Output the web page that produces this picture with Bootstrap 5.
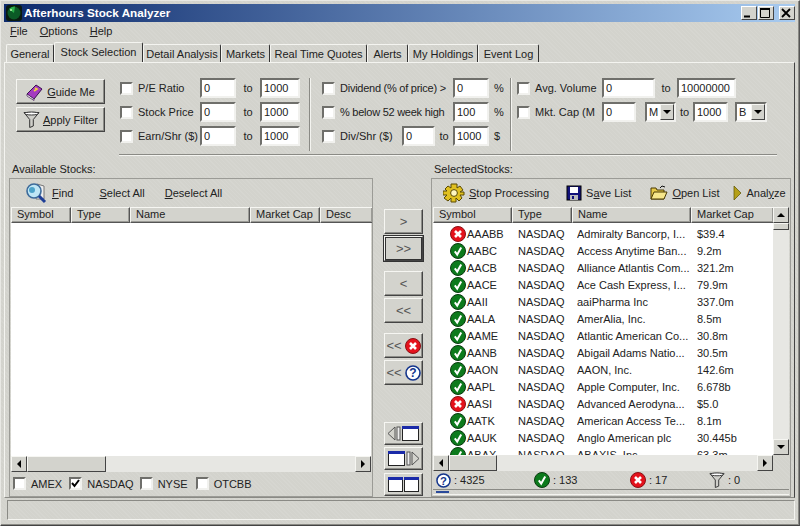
<!DOCTYPE html>
<html lang="en">
<head>
<meta charset="utf-8">
<title>Afterhours Stock Analyzer</title>
<link rel="stylesheet" href="https://cdn.jsdelivr.net/npm/bootstrap@5.3.0/dist/css/bootstrap.min.css">
<style>
html,body{margin:0;width:800px;height:526px;overflow:hidden;background:#d3d3cd}
body{font:11px/14px "Liberation Sans",Arial,sans-serif;color:#222}
.appwin{width:800px;height:526px;padding:3px 4px 5px 3px;background:#d3d3cd;border:1px solid #e8e8e4;border-right-color:#555;border-bottom-color:#444;box-shadow:inset -1px -1px 0 #8a8a85;
 background-image:repeating-linear-gradient(45deg,rgba(255,255,255,.07) 0 1px,transparent 1px 3px)}
.capbar{height:18px;flex:none;background:linear-gradient(90deg,#0c2a6c,#a8cbf0);color:#fff;font-weight:700;font-size:11.7px;padding-left:2px}
.capbar svg{margin-right:2px}
.capbtn{width:16px;height:14px;background:#d3d3cd;border:1px solid;border-color:#fff #444 #444 #fff;margin-right:1px;color:#000;display:flex;align-items:center;justify-content:center}
.menubar{height:20px;flex:none;padding:2px 6px 0;gap:12px;color:#222}
.menubar u,.wbtn u,.tooltxt u{text-underline-offset:1px}
.tabline{height:20px;flex:none;padding-left:2px;border:0;align-items:flex-end}
.tabitem{height:18px;padding:2px 0 0;text-align:center;flex:none;background:transparent;border:1px solid;border-color:#f4f4f0 #333 transparent #f4f4f0;border-bottom:0;border-radius:2px 2px 0 0;color:#222;white-space:nowrap}
.tabitem.sel{height:20px;position:relative;z-index:1;background:#d3d3cd}
.tb48{width:48px}.tb89{width:89px}.tb78{width:78px}.tb49{width:49px}.tb97{width:97px}.tb41{width:41px}.tb70{width:70px}.tb61{width:61px}
.panel{height:436px;flex:none;border:1px solid;border-color:#f4f4f0 #444 #8a8a85 #f4f4f0;padding:15px 4px 0 4px}
.filters{height:76px;flex:none;gap:0}
.wbtn{border:1px solid;border-color:#f6f6f2 #444 #444 #f6f6f2;box-shadow:inset -1px -1px 0 #8d8d88;background:#d3d3cd;border-radius:0;padding:0;color:#222;font:inherit;display:flex;align-items:center;justify-content:center;gap:3px}
.wbtn:hover{background:#d3d3cd;color:#222}
.guide{width:89px;height:25px}
.btnstack{width:111px;padding:1px 0 0 7px;gap:3px}
.fgroup{gap:4px;height:73px}
.g1{width:189px}
.g2{width:191px;margin-left:8px;padding-left:3px}
.g3{margin-left:5px}
.frow{height:20px;display:flex;align-items:center}
.wfield{height:20px;border:2px solid;border-color:#6f6f6b #f1f1ee #f1f1ee #6f6f6b;background:#fff;padding:0 0 0 2px;border-radius:0;font:inherit;color:#222;min-height:0;box-shadow:none;flex:none}
.wfield:focus{box-shadow:none;border-color:#6f6f6b #f1f1ee #f1f1ee #6f6f6b}
.wcheck{width:13px;height:13px;margin:0;border:2px solid;border-color:#6f6f6b #f1f1ee #f1f1ee #6f6f6b;border-radius:0!important;background:#fff;flex:none;float:none}
.wcheck:checked{background-color:#fff;border-color:#6f6f6b #f1f1ee #f1f1ee #6f6f6b;background-image:url("data:image/svg+xml,%3csvg xmlns='http://www.w3.org/2000/svg' viewBox='0 0 9 9'%3e%3cpath d='M1 4l2.5 3L8 1' fill='none' stroke='%23000' stroke-width='2'/%3e%3c/svg%3e");background-size:9px}
.wcheck:focus{box-shadow:none}
.lab{margin-left:5px;white-space:nowrap;flex:none}
.l62{width:62px}.l113{width:113px;letter-spacing:-.25px}.l67{width:67px}
.i33{width:33px}.i34{width:34px}.i35{width:35px}.i36{width:36px}.i40{width:40px}.i53{width:53px}.i59{width:59px}
.t24{width:24px}.t18{width:18px}.t22{width:22px}.t17{width:17px}
.unit{margin-left:5px}
.vsep{width:2px;height:73px;background:#8a8a85;border-right:1px solid #f4f4f0;flex:none}
.tolab{text-align:center;flex:none}
.wsel{display:flex;border:2px solid;border-color:#6f6f6b #f1f1ee #f1f1ee #6f6f6b;height:20px;background:#fff;padding-left:2px;align-items:center;justify-content:space-between;width:32px;flex:none}
.sel1{margin-left:9px;width:31px}.sel2{margin-left:7px}
.wsel b{width:14px;height:16px;background:#d3d3cd;border:1px solid;border-color:#f6f6f2 #444 #444 #f6f6f2;display:flex;align-items:center;justify-content:center}
.tri{width:0;height:0;border-left:4px solid transparent;border-right:4px solid transparent;border-top:4px solid #000}
.hrule{height:2px;flex:none;background:#8a8a85;border-bottom:1px solid #f4f4f0;margin:0 13px 0 110px}
.caplab{height:16px;flex:none;margin-top:6px;padding-left:3px;line-height:14px;white-space:nowrap}
.capr{width:356px;margin-left:auto}
.lowmain{height:319px;flex:none}
.wbox{border:1px solid;border-color:#f4f4f0 #8a8a85 #f4f4f0 #f4f4f0;outline:1px solid #9b9b96;outline-offset:-1px;padding:1px;display:flex;flex-direction:column;height:319px}
.leftcol{width:364px;flex:none}
.rightcol{width:360px;flex:none}
.midcol{width:39px;margin:0 8px 0 11px;flex:none}
.toolrow{height:27px;flex:none;align-items:center;white-space:nowrap;padding-bottom:2px}
.tooltxt{display:flex;align-items:center;gap:4px}
.tfind{margin-left:13px}.tsel{margin-left:26px}.tdes{margin-left:20px}
.tstop{margin-left:10px}.tsave{margin-left:17px}.topen{margin-left:19px}.tana{margin-left:14px}
.gridhead{height:16px;flex:none;display:flex}
.colh{height:16px;border:1px solid;border-color:#f6f6f2 #555 #555 #f6f6f2;box-shadow:inset -1px -1px 0 #9b9b96;padding:0 0 0 5px;line-height:13px;background:#d3d3cd;white-space:nowrap;overflow:hidden;flex:none}
.h60{width:60px}.h59{width:59px}.h120{width:120px}.h70{width:70px}.h53{width:53px}.h79{width:79px}.h119{width:119px}.h83{width:83px}
.whitearea{background:#fff;flex:1;min-height:0;overflow:hidden}
.rowsbox{padding-top:2px}
.hbar{height:16px;flex:none;display:flex;background:#e7e7e3}
.hbar2{margin-right:16px}
.vbar{width:16px;background:#e7e7e3;flex:none}
.sbtn{width:16px;height:16px;background:#d3d3cd;border:1px solid;border-color:#f6f6f2 #444 #444 #f6f6f2;display:flex;align-items:center;justify-content:center;flex:none}
.tl{width:0;height:0;border-top:4px solid transparent;border-bottom:4px solid transparent;border-right:4px solid #000}
.tr{width:0;height:0;border-top:4px solid transparent;border-bottom:4px solid transparent;border-left:4px solid #000}
.tu{width:0;height:0;border-left:4px solid transparent;border-right:4px solid transparent;border-bottom:4px solid #000}
.thumb{background:#d3d3cd;border:1px solid;border-color:#f6f6f2 #444 #444 #f6f6f2;flex:none}
.th79{width:79px}.th48{width:48px}.th7{height:7px}
.exrow{height:23px;flex:none;padding-left:2px;align-items:center;gap:0}
.ex1{margin-right:7px}.ex2{margin-right:6px}.ex3{margin-right:8px}
.stock-row{height:17px;display:flex;align-items:center;white-space:nowrap;color:#222}
.stock-row svg{margin-left:17px;flex:none}
.c1{width:52px;padding-left:1px;flex:none}
.c2{width:59px;flex:none}
.c3{width:120px;flex:none;overflow:hidden}
.statrow{height:18px;flex:none;align-items:center;padding-left:3px}
.statcell{display:flex;align-items:center;gap:3px;flex:none}
.s1{width:98px}.s2{width:96px}.s3{width:79px}
.minibar{height:6px;flex:none;border-top:1px solid #8a8a85;border-bottom:1px solid #f4f4f0}
.minibar i{display:block;width:13px;height:2px;background:#2a4a9a;margin:1px 0 0 3px}
.statusbar{height:20px;margin:2px 0 0 3px;border:1px solid;border-color:#8a8a85 #f4f4f0 #f4f4f0 #8a8a85;flex:none}
.mv{width:39px;height:25px;color:#555;font-size:13px;line-height:14px;gap:3px;margin-top:2px}
.mvfirst{margin-top:31px}.mvgap{margin-top:10px}
.paneb{width:39px;height:23px;gap:0;margin-top:2px}
.panefirst{margin-top:37px}.panelast{margin-top:3px}
.focusb{outline:1px solid #333;box-shadow:inset 0 0 0 1px #333}
.defs{height:0;display:block}
</style>
</head>
<body>
<svg width="0" height="0" class="defs">
<defs>
<symbol id="iok" viewBox="0 0 16 16"><circle cx="8" cy="8" r="7.5" fill="#0c7a1c" stroke="#0a3a10"/><path d="M4.8 8.4l2.4 3.2 4-7" fill="none" stroke="#fff" stroke-width="2"/></symbol>
<symbol id="ino" viewBox="0 0 16 16"><circle cx="8" cy="8" r="7.5" fill="#e4121c" stroke="#8a1015"/><path d="M5 5l6 6M11 5l-6 6" stroke="#fff" stroke-width="2.6"/></symbol>
<symbol id="iqu" viewBox="0 0 16 16"><circle cx="8" cy="8" r="7" fill="#fff" stroke="#14358c" stroke-width="1.6"/><text x="8" y="12.4" font-family="Liberation Sans" font-weight="700" font-size="12" text-anchor="middle" fill="#14358c">?</text></symbol>
<symbol id="ifun" viewBox="0 0 17 17"><path d="M1 1.5h15l-5.7 7v6.5l-3.6 1.5v-8z" fill="#cfcfca" stroke="#333"/><ellipse cx="8.5" cy="2.500" rx="7" ry="1.500" fill="#fff" stroke="#333"/></symbol>
</defs>
</svg>
<div class="appwin d-flex flex-column">
  <div class="capbar d-flex align-items-center">
    <svg width="16" height="16" viewBox="0 0 16 16"><rect width="16" height="16" rx="3" fill="#0a1a10"/><circle cx="8" cy="8" r="6.500" fill="#0b5a26"/><path d="M8 8L3 4a7 7 0 0 1 6-2.500z" fill="#2bb14a"/><circle cx="5" cy="5" r="1" fill="#b8f5a8"/></svg>
    <span class="flex-grow-1">Afterhours Stock Analyzer</span>
    <span class="capbtn"><svg width="10" height="10" viewBox="0 0 10 10"><rect x="1" y="7.500" width="6" height="2" fill="#000"/></svg></span>
    <span class="capbtn"><svg width="10" height="10" viewBox="0 0 10 10"><path d="M.5.5h9v9h-9z" fill="none" stroke="#000"/><rect y="0" width="10" height="2"/></svg></span>
    <span class="capbtn ms-1 me-0"><svg width="10" height="10" viewBox="0 0 10 10"><path d="M1 1l8 8M9 1l-8 8" stroke="#000" stroke-width="1.800"/></svg></span>
  </div>
  <div class="menubar d-flex"><span><u>F</u>ile</span><span><u>O</u>ptions</span><span><u>H</u>elp</span></div>
  <div class="nav tabline d-flex flex-nowrap">
    <span class="tabitem tb48">General</span><span class="tabitem sel tb89">Stock Selection</span><span class="tabitem tb78">Detail Analysis</span><span class="tabitem tb49">Markets</span><span class="tabitem tb97">Real Time Quotes</span><span class="tabitem tb41">Alerts</span><span class="tabitem tb70">My Holdings</span><span class="tabitem tb61">Event Log</span>
  </div>
  <div class="panel d-flex flex-column">
    <div class="filters d-flex">
      <div class="btnstack d-flex flex-column">
        <button class="wbtn guide" type="button">
          <svg width="18" height="18" viewBox="0 0 18 18"><path d="M1 11L10 2l6 4-8 10z" fill="#a43ac0" stroke="#3a1050"/><path d="M1 11l7 5v1.500L1 13z" fill="#fff" stroke="#3a1050" stroke-width=".7"/><path d="M9 5l2 1-3 2" fill="none" stroke="#f2d040" stroke-width="1.600"/></svg>
          <span><u>G</u>uide Me</span></button>
        <button class="wbtn guide" type="button"><svg width="17" height="17"><use href="#ifun"/></svg><span><u>A</u>pply Filter</span></button>
      </div>
      <div class="fgroup g1 d-flex flex-column">
        <div class="frow"><input class="form-check-input wcheck" type="checkbox"><span class="lab l62">P/E Ratio</span><input class="form-control wfield i36" value="0"><span class="tolab t24">to</span><input class="form-control wfield i40" value="1000"></div>
        <div class="frow"><input class="form-check-input wcheck" type="checkbox"><span class="lab l62">Stock Price</span><input class="form-control wfield i36" value="0"><span class="tolab t24">to</span><input class="form-control wfield i40" value="1000"></div>
        <div class="frow"><input class="form-check-input wcheck" type="checkbox"><span class="lab l62">Earn/Shr ($)</span><input class="form-control wfield i36" value="0"><span class="tolab t24">to</span><input class="form-control wfield i40" value="1000"></div>
      </div>
      <div class="vsep"></div>
      <div class="fgroup g2 d-flex flex-column">
        <div class="frow"><input class="form-check-input wcheck" type="checkbox"><span class="lab l113">Dividend (% of price) &gt;</span><input class="form-control wfield i36" value="0"><span class="unit">%</span></div>
        <div class="frow"><input class="form-check-input wcheck" type="checkbox"><span class="lab l113">% below 52 week high</span><input class="form-control wfield i36" value="100"><span class="unit">%</span></div>
        <div class="frow"><input class="form-check-input wcheck" type="checkbox"><span class="lab l62">Div/Shr ($)</span><input class="form-control wfield i33" value="0"><span class="tolab t18">to</span><input class="form-control wfield i36" value="1000"><span class="unit">$</span></div>
      </div>
      <div class="vsep"></div>
      <div class="fgroup g3 d-flex flex-column">
        <div class="frow"><input class="form-check-input wcheck" type="checkbox"><span class="lab l67">Avg. Volume</span><input class="form-control wfield i53" value="0"><span class="tolab t22">to</span><input class="form-control wfield i59" value="10000000"></div>
        <div class="frow"><input class="form-check-input wcheck" type="checkbox"><span class="lab l67">Mkt. Cap (M</span><input class="form-control wfield i34" value="0"><span class="wsel sel1"><span>M</span><b><i class="tri"></i></b></span><span class="tolab t17">to</span><input class="form-control wfield i35" value="1000"><span class="wsel sel2"><span>B</span><b><i class="tri"></i></b></span></div>
      </div>
    </div>
    <div class="hrule"></div>
    <div class="caplab d-flex"><span class="leftcol">Available Stocks:</span><span class="capr">SelectedStocks:</span></div>
    <div class="lowmain d-flex">
      <div class="wbox leftcol">
        <div class="toolrow d-flex">
          <span class="tooltxt tfind"><svg width="24" height="24" viewBox="0 0 24 24"><path d="M13 3l7 2v13h-8z" fill="#eee" stroke="#777"/><circle cx="10" cy="10" r="7" fill="#bfe6f5" stroke="#3c6a9a" stroke-width="1.600"/><circle cx="8" cy="9" r="3" fill="#4da3c9"/><path d="M15 15l6 6" stroke="#1e3e96" stroke-width="3"/></svg><span><u>F</u>ind</span></span>
          <span class="tooltxt tsel"><span><u>S</u>elect All</span></span>
          <span class="tooltxt tdes"><span><u>D</u>eselect All</span></span>
        </div>
        <div class="gridhead">
          <span class="colh h60">Symbol</span><span class="colh h59">Type</span><span class="colh h120">Name</span><span class="colh h70">Market Cap</span><span class="colh h53">Desc</span>
        </div>
        <div class="whitearea"></div>
        <div class="hbar"><span class="sbtn"><i class="tl"></i></span><span class="thumb th79"></span><span class="flex-grow-1"></span><span class="sbtn"><i class="tr"></i></span></div>
        <div class="exrow d-flex">
          <input class="form-check-input wcheck" type="checkbox"><span class="lab ex1">AMEX</span>
          <input class="form-check-input wcheck" type="checkbox" checked><span class="lab ex2">NASDAQ</span>
          <input class="form-check-input wcheck" type="checkbox"><span class="lab ex3">NYSE</span>
          <input class="form-check-input wcheck" type="checkbox"><span class="lab">OTCBB</span>
        </div>
      </div>
      <div class="midcol d-flex flex-column">
        <button class="wbtn mv mvfirst" type="button">&gt;</button>
        <button class="wbtn mv focusb" type="button">&gt;&gt;</button>
        <button class="wbtn mv mvgap" type="button">&lt;</button>
        <button class="wbtn mv" type="button">&lt;&lt;</button>
        <button class="wbtn mv mvgap" type="button">&lt;&lt;<svg width="16" height="16"><use href="#ino"/></svg></button>
        <button class="wbtn mv" type="button">&lt;&lt;<svg width="16" height="16"><use href="#iqu"/></svg></button>
        <button class="wbtn paneb panefirst" type="button"><svg width="33" height="17" viewBox="0 0 33 17"><path d="M1 8.500L8 2v13z" fill="none" stroke="#555"/><rect x="10" y="2" width="3" height="13" fill="#eee" stroke="#555"/><rect x="15.500" y="1.500" width="16" height="14" fill="#fff" stroke="#222"/><rect x="15" y="1" width="17" height="3" fill="#1a2aa8"/></svg></button>
        <button class="wbtn paneb" type="button"><svg width="33" height="17" viewBox="0 0 33 17"><path d="M32 8.500L25 2v13z" fill="none" stroke="#555"/><rect x="20" y="2" width="3" height="13" fill="#eee" stroke="#555"/><rect x="1.500" y="1.500" width="16" height="14" fill="#fff" stroke="#222"/><rect x="1" y="1" width="17" height="3" fill="#1a2aa8"/></svg></button>
        <button class="wbtn paneb panelast" type="button"><svg width="33" height="17" viewBox="0 0 33 17"><rect x="1.500" y="1.500" width="14" height="14" fill="#fff" stroke="#222"/><rect x="17.500" y="1.500" width="14" height="14" fill="#fff" stroke="#222"/><rect x="1" y="1" width="15" height="3" fill="#1a2aa8"/><rect x="17" y="1" width="15" height="3" fill="#1a2aa8"/></svg></button>
      </div>
      <div class="wbox rightcol">
        <div class="toolrow d-flex">
          <span class="tooltxt tstop"><svg width="22" height="20" viewBox="0 0 22 20"><g stroke="#5a4a00" fill="#e0c020"><path d="M8 1h6v4l3-2 3 4-3 2h4v3h-4l2 3-3 3-3-3v4H8v-4l-3 3-4-3 3-3H0V8h4L2 6l3-3 3 2z"/><circle cx="11" cy="10" r="3.400" fill="#fff6c0"/></g></svg><span><u>S</u>top Processing</span></span>
          <span class="tooltxt tsave"><svg width="16" height="16" viewBox="0 0 16 16"><rect x="1" y="1" width="14" height="14" fill="#12127a" stroke="#000"/><rect x="4" y="2" width="8" height="6" fill="#fff"/><rect x="4" y="10" width="8" height="5" fill="#bbb"/><rect x="6" y="11" width="2" height="3" fill="#12127a"/></svg><span>S<u>a</u>ve List</span></span>
          <span class="tooltxt topen"><svg width="18" height="16" viewBox="0 0 18 16"><path d="M1 3h5l1 2h7v9H1z" fill="#e6c94a" stroke="#4a3a00"/><path d="M4 7h13l-3 7H1z" fill="#f6e68a" stroke="#4a3a00"/><path d="M10 3l2-2 3 1" fill="none" stroke="#111"/></svg><span><u>O</u>pen List</span></span>
          <span class="tooltxt tana"><svg width="9" height="14" viewBox="0 0 9 14"><path d="M1 0l7 7-7 7z" fill="#b5a018" stroke="#5a5000" stroke-width=".7"/></svg><span>Anal<u>y</u>ze</span></span>
        </div>
        <div class="d-flex flex-grow-1 overflow-hidden">
          <div class="d-flex flex-column flex-grow-1 overflow-hidden">
            <div class="gridhead">
              <span class="colh h79">Symbol</span><span class="colh h60">Type</span><span class="colh h119">Name</span><span class="colh h83">Market Cap</span>
            </div>
            <div class="whitearea rowsbox">
              <div class="stock-row"><svg width="16" height="16"><use href="#ino"/></svg><span class="c1">AAABB</span><span class="c2">NASDAQ</span><span class="c3">Admiralty Bancorp, I...</span><span>$39.4</span></div>
              <div class="stock-row"><svg width="16" height="16"><use href="#iok"/></svg><span class="c1">AABC</span><span class="c2">NASDAQ</span><span class="c3">Access Anytime Ban...</span><span>9.2m</span></div>
              <div class="stock-row"><svg width="16" height="16"><use href="#iok"/></svg><span class="c1">AACB</span><span class="c2">NASDAQ</span><span class="c3">Alliance Atlantis Com...</span><span>321.2m</span></div>
              <div class="stock-row"><svg width="16" height="16"><use href="#iok"/></svg><span class="c1">AACE</span><span class="c2">NASDAQ</span><span class="c3">Ace Cash Express, I...</span><span>79.9m</span></div>
              <div class="stock-row"><svg width="16" height="16"><use href="#iok"/></svg><span class="c1">AAII</span><span class="c2">NASDAQ</span><span class="c3">aaiPharma Inc</span><span>337.0m</span></div>
              <div class="stock-row"><svg width="16" height="16"><use href="#iok"/></svg><span class="c1">AALA</span><span class="c2">NASDAQ</span><span class="c3">AmerAlia, Inc.</span><span>8.5m</span></div>
              <div class="stock-row"><svg width="16" height="16"><use href="#iok"/></svg><span class="c1">AAME</span><span class="c2">NASDAQ</span><span class="c3">Atlantic American Co...</span><span>30.8m</span></div>
              <div class="stock-row"><svg width="16" height="16"><use href="#iok"/></svg><span class="c1">AANB</span><span class="c2">NASDAQ</span><span class="c3">Abigail Adams Natio...</span><span>30.5m</span></div>
              <div class="stock-row"><svg width="16" height="16"><use href="#iok"/></svg><span class="c1">AAON</span><span class="c2">NASDAQ</span><span class="c3">AAON, Inc.</span><span>142.6m</span></div>
              <div class="stock-row"><svg width="16" height="16"><use href="#iok"/></svg><span class="c1">AAPL</span><span class="c2">NASDAQ</span><span class="c3">Apple Computer, Inc.</span><span>6.678b</span></div>
              <div class="stock-row"><svg width="16" height="16"><use href="#ino"/></svg><span class="c1">AASI</span><span class="c2">NASDAQ</span><span class="c3">Advanced Aerodyna...</span><span>$5.0</span></div>
              <div class="stock-row"><svg width="16" height="16"><use href="#iok"/></svg><span class="c1">AATK</span><span class="c2">NASDAQ</span><span class="c3">American Access Te...</span><span>8.1m</span></div>
              <div class="stock-row"><svg width="16" height="16"><use href="#iok"/></svg><span class="c1">AAUK</span><span class="c2">NASDAQ</span><span class="c3">Anglo American plc</span><span>30.445b</span></div>
              <div class="stock-row"><svg width="16" height="16"><use href="#iok"/></svg><span class="c1">ABAX</span><span class="c2">NASDAQ</span><span class="c3">ABAXIS, Inc.</span><span>63.3m</span></div>
            </div>
          </div>
          <div class="vbar d-flex flex-column">
            <span class="sbtn"><i class="tu"></i></span><span class="thumb th7"></span><span class="flex-grow-1"></span><span class="sbtn"><i class="tri"></i></span>
          </div>
        </div>
        <div class="hbar hbar2"><span class="sbtn"><i class="tl"></i></span><span class="thumb th48"></span><span class="flex-grow-1"></span><span class="sbtn"><i class="tr"></i></span></div>
        <div class="statrow d-flex">
          <span class="statcell s1"><svg width="15" height="15"><use href="#iqu"/></svg>: 4325</span>
          <span class="statcell s2"><svg width="16" height="16"><use href="#iok"/></svg>: 133</span>
          <span class="statcell s3"><svg width="16" height="16"><use href="#ino"/></svg>: 17</span>
          <span class="statcell"><svg width="16" height="16"><use href="#ifun"/></svg>: 0</span>
        </div>
        <div class="minibar"><i></i></div>
      </div>
    </div>
  </div>
  <div class="statusbar"></div>
</div>
</body>
</html>
